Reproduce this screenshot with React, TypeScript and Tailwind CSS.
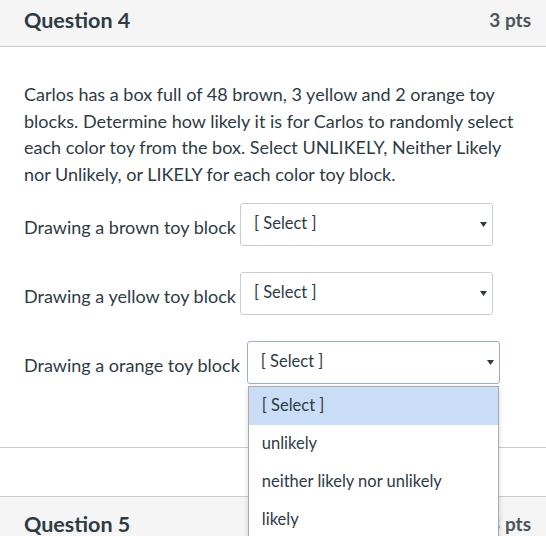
import React from 'react'

const rows = [
  { label: 'Drawing a brown toy block', open: false },
  { label: 'Drawing a yellow toy block', open: false },
  { label: 'Drawing a orange toy block', open: true },
]

const options = ['[ Select ]', 'unlikely', 'neither likely nor unlikely', 'likely']

function Arrow() {
  return (
    <svg width="7" height="5" viewBox="0 0 7 5" className="shrink-0">
      <path d="M0 0 L7 0 L3.5 5 Z" fill="#2d3b45" />
    </svg>
  )
}

function SelectBox({ open }: { open: boolean }) {
  return (
    <div className={`relative ${open ? 'ml-[7px]' : 'ml-[4px]'}`}>
      <div
        className={`flex h-[43px] w-[253px] items-center justify-between rounded-[3px] border bg-white pl-[13px] pr-[5px] text-[16.5px] ${
          open ? 'border-[#8fb0e0]' : 'border-[#c7cdd1]'
        }`}
      >
        <span className="-mt-[2px]">[ Select ]</span>
        <Arrow />
      </div>
      {open && (
        <div className="absolute left-[1px] top-[45px] z-10 w-[251px] border border-[#aaaaaa] bg-white shadow-[0_2px_6px_rgba(0,0,0,0.15)]">
          {options.map((o, i) => (
            <div
              key={o}
              className={`flex h-[38px] items-center px-[13px] text-[16.5px] ${
                i === 0 ? 'bg-[#c9def6]' : ''
              }`}
            >
              {o}
            </div>
          ))}
        </div>
      )}
    </div>
  )
}

export default function App() {
  return (
    <div
      className="h-[536px] w-[546px] overflow-hidden bg-white text-[#2d3b45]"
      style={{ fontFamily: 'Lato, "Noto Sans", sans-serif' }}
    >
      <div className="border-b border-[#c7cdd1]">
        <div className="flex h-[47px] items-center justify-between border-b border-[#c7cdd1] bg-[#f5f5f5] px-[15px] pl-[24px]">
          <h2 className="-mt-[6px] text-[21.5px] font-bold">Question 4</h2>
          <span className="-mt-[6px] text-[19px] font-bold text-[#4a545b]">3 pts</span>
        </div>
        <div className="px-[24px] pb-[63px] pt-[34px]">
          <p className="text-[18px] leading-[26.7px]">
            Carlos has a box full of 48 brown, 3 yellow and 2 orange toy blocks. Determine how likely it
            is for Carlos to randomly select each color toy from the box. Select UNLIKELY, Neither
            Likely nor Unlikely, or LIKELY for each color toy block.
          </p>
          <div className="mt-[15px] flex flex-col gap-[26px]">
            {rows.map((r) => (
              <div key={r.label} className="flex items-center">
                <span className="pt-[7px] text-[18px] leading-[26.7px]">{r.label}</span>
                <SelectBox open={r.open} />
              </div>
            ))}
          </div>
        </div>
      </div>
      <div className="h-[48px]" />
      <div className="flex h-[48px] items-center justify-between border-t border-[#c7cdd1] bg-[#f5f5f5] px-[15px] pl-[24px]">
        <h2 className="mt-[8px] text-[21.5px] font-bold">Question 5</h2>
        <span className="mt-[8px] text-[19px] font-bold text-[#4a545b]">3 pts</span>
      </div>
    </div>
  )
}
